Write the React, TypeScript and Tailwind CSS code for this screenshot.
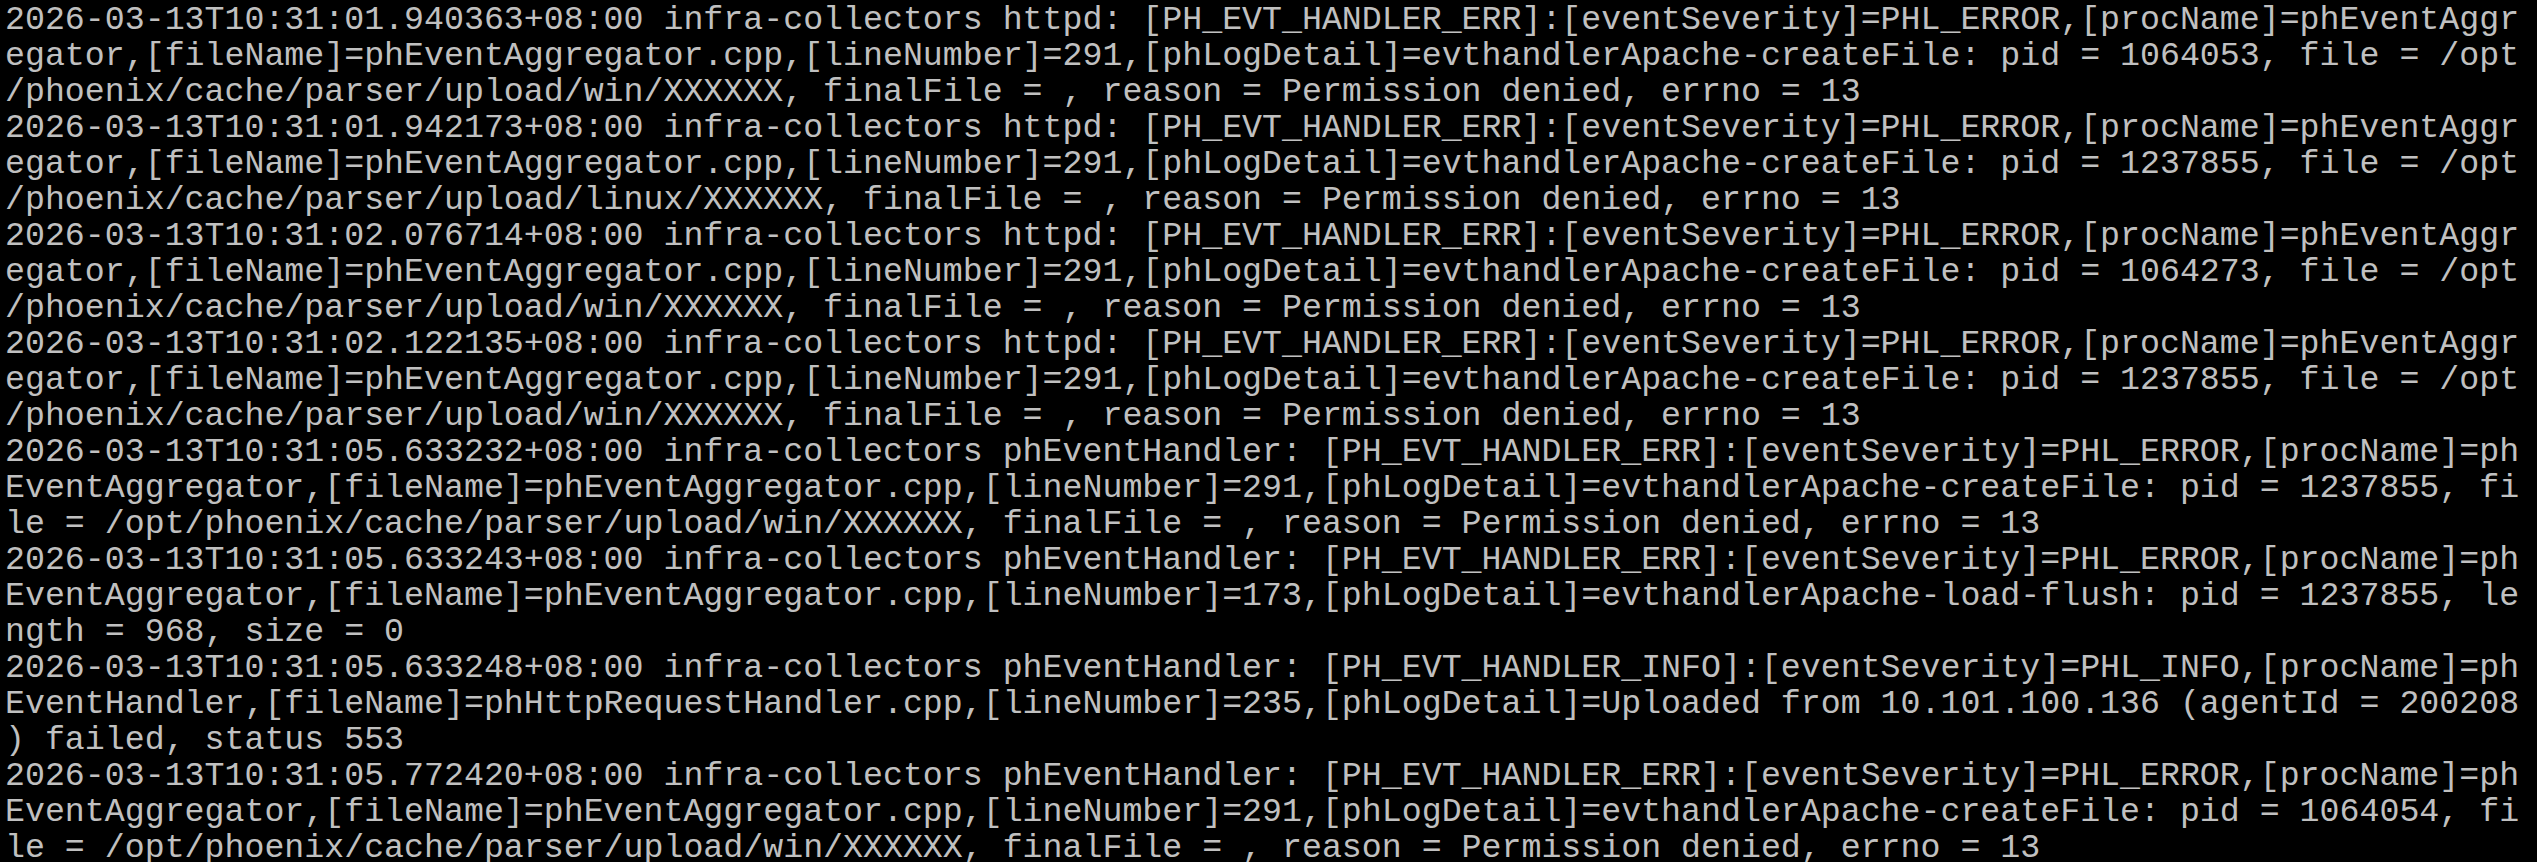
const A = "2026-03-13T10:31:0";
const lines: string[] = [
  "2026-03-13T10:31:01.940363+08:00 infra-collectors httpd: [PH_EVT_HANDLER_ERR]:[eventSeverity]=PHL_ERROR,[procName]=phEventAggr",
  "egator,[fileName]=phEventAggregator.cpp,[lineNumber]=291,[phLogDetail]=evthandlerApache-createFile: pid = 1064053, file = /opt",
  "/phoenix/cache/parser/upload/win/XXXXXX, finalFile = , reason = Permission denied, errno = 13",
  "2026-03-13T10:31:01.942173+08:00 infra-collectors httpd: [PH_EVT_HANDLER_ERR]:[eventSeverity]=PHL_ERROR,[procName]=phEventAggr",
  "egator,[fileName]=phEventAggregator.cpp,[lineNumber]=291,[phLogDetail]=evthandlerApache-createFile: pid = 1237855, file = /opt",
  "/phoenix/cache/parser/upload/linux/XXXXXX, finalFile = , reason = Permission denied, errno = 13",
  "2026-03-13T10:31:02.076714+08:00 infra-collectors httpd: [PH_EVT_HANDLER_ERR]:[eventSeverity]=PHL_ERROR,[procName]=phEventAggr",
  "egator,[fileName]=phEventAggregator.cpp,[lineNumber]=291,[phLogDetail]=evthandlerApache-createFile: pid = 1064273, file = /opt",
  "/phoenix/cache/parser/upload/win/XXXXXX, finalFile = , reason = Permission denied, errno = 13",
  "2026-03-13T10:31:02.122135+08:00 infra-collectors httpd: [PH_EVT_HANDLER_ERR]:[eventSeverity]=PHL_ERROR,[procName]=phEventAggr",
  "egator,[fileName]=phEventAggregator.cpp,[lineNumber]=291,[phLogDetail]=evthandlerApache-createFile: pid = 1237855, file = /opt",
  "/phoenix/cache/parser/upload/win/XXXXXX, finalFile = , reason = Permission denied, errno = 13",
  "2026-03-13T10:31:05.633232+08:00 infra-collectors phEventHandler: [PH_EVT_HANDLER_ERR]:[eventSeverity]=PHL_ERROR,[procName]=ph",
  "EventAggregator,[fileName]=phEventAggregator.cpp,[lineNumber]=291,[phLogDetail]=evthandlerApache-createFile: pid = 1237855, fi",
  "le = /opt/phoenix/cache/parser/upload/win/XXXXXX, finalFile = , reason = Permission denied, errno = 13",
  "2026-03-13T10:31:05.633243+08:00 infra-collectors phEventHandler: [PH_EVT_HANDLER_ERR]:[eventSeverity]=PHL_ERROR,[procName]=ph",
  "EventAggregator,[fileName]=phEventAggregator.cpp,[lineNumber]=173,[phLogDetail]=evthandlerApache-load-flush: pid = 1237855, le",
  "ngth = 968, size = 0",
  "2026-03-13T10:31:05.633248+08:00 infra-collectors phEventHandler: [PH_EVT_HANDLER_INFO]:[eventSeverity]=PHL_INFO,[procName]=ph",
  "EventHandler,[fileName]=phHttpRequestHandler.cpp,[lineNumber]=235,[phLogDetail]=Uploaded from 10.101.100.136 (agentId = 200208",
  ") failed, status 553",
  "2026-03-13T10:31:05.772420+08:00 infra-collectors phEventHandler: [PH_EVT_HANDLER_ERR]:[eventSeverity]=PHL_ERROR,[procName]=ph",
  "EventAggregator,[fileName]=phEventAggregator.cpp,[lineNumber]=291,[phLogDetail]=evthandlerApache-createFile: pid = 1064054, fi",
  "le = /opt/phoenix/cache/parser/upload/win/XXXXXX, finalFile = , reason = Permission denied, errno = 13",
];
void A;

export default function App() {
  return (
    <div className="h-[862px] w-[2537px] overflow-hidden bg-black pl-[5px] pt-[2px] text-[#c0c0c0] font-['Liberation_Mono','Courier_New',monospace] text-[33.25px] leading-[36px] whitespace-pre">
      {lines.map((l, i) => (
        <div key={i} className="h-[36px]">{l}</div>
      ))}
    </div>
  );
}
